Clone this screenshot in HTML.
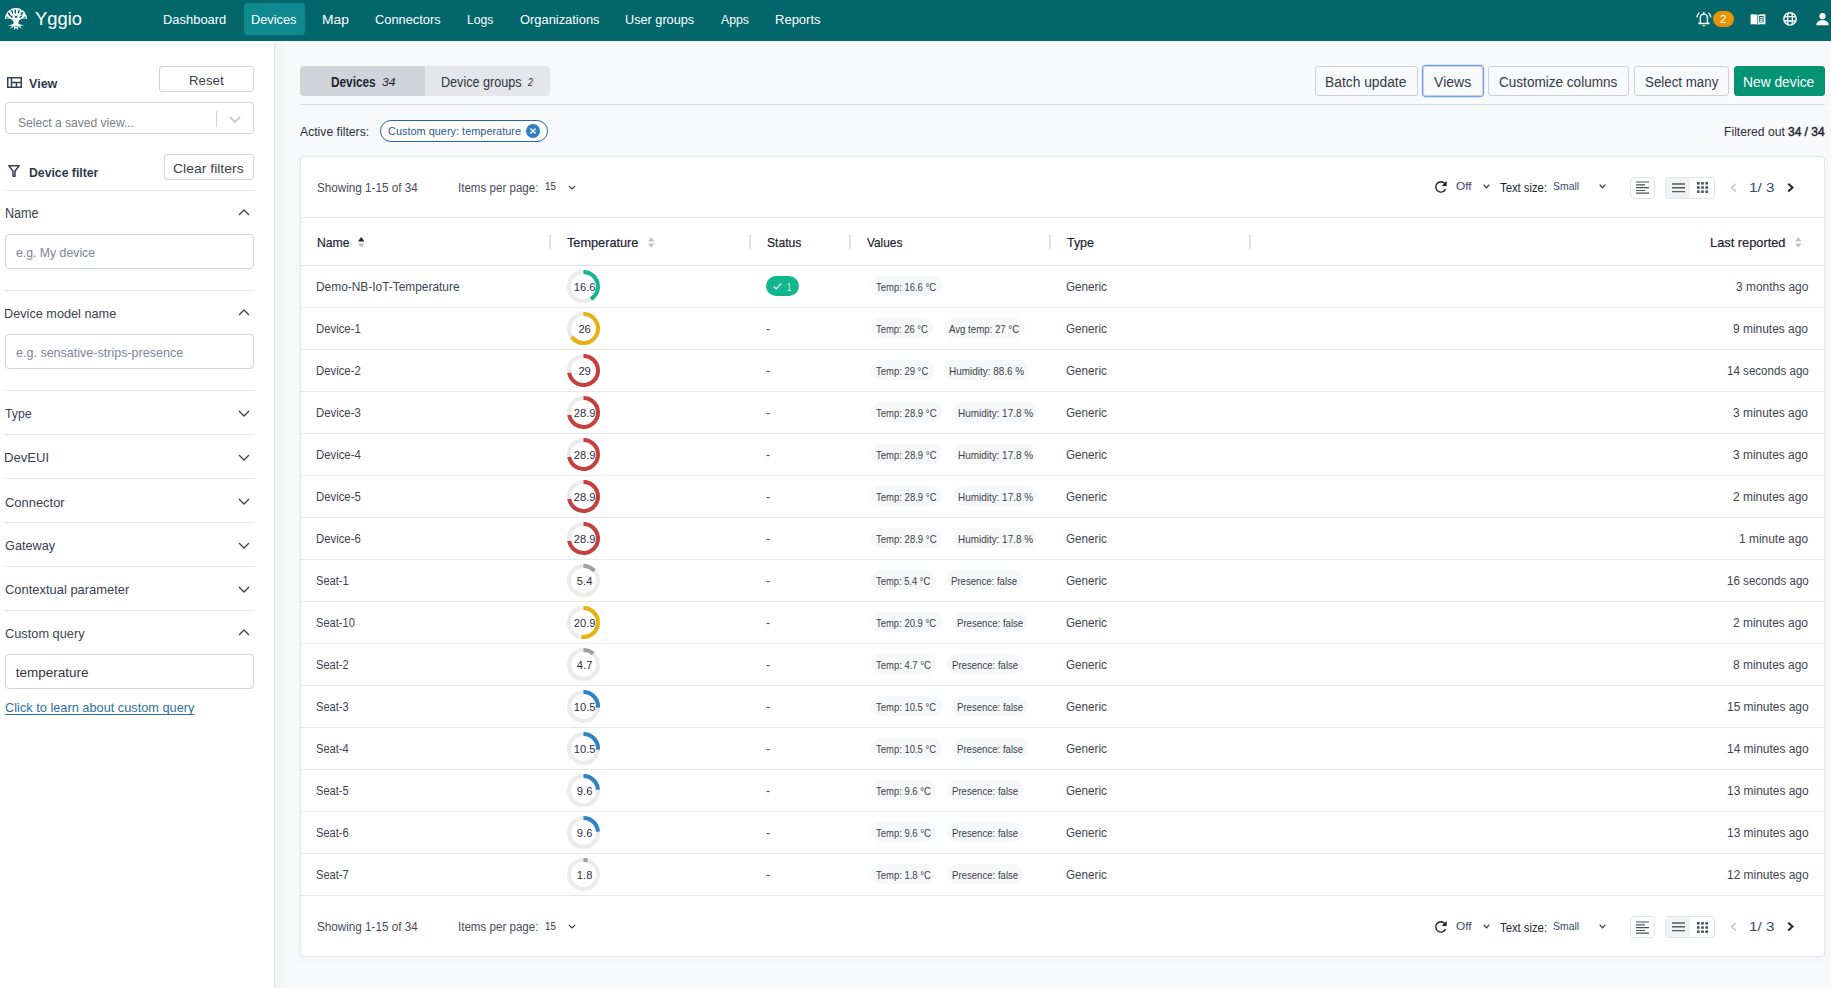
<!DOCTYPE html><html><head><meta charset="utf-8"><style>
*{box-sizing:border-box;margin:0;padding:0}
html,body{width:1831px;height:988px;overflow:hidden;background:#f8f9fb;font-family:"Liberation Sans",sans-serif}
.t{position:absolute;line-height:1;white-space:nowrap;transform-origin:0 0}
.r{position:absolute}
svg{position:absolute;overflow:visible}
</style></head><body>
<div class="r" style="left:0px;top:0px;width:1831px;height:41px;background:#02666b"></div>
<svg style="left:5px;top:8px" width="22" height="22" viewBox="0 0 22 22">
<path fill="#fff" d="M0 10.9 C0 4.6 5 0 11 0 C17 0 22 4.6 22 10.9 C19.2 10.3 16.6 10.7 14.6 11.9 C13.7 12.6 13.4 14 13.5 16 C14.3 16.6 15.4 16.9 16.6 17.1 L5.4 17.1 C6.6 16.9 7.7 16.6 8.5 16 C8.6 14 8.3 12.6 7.4 11.9 C5.4 10.7 2.8 10.3 0 10.9Z"/>
<path fill="#fff" opacity="0.9" d="M8.6 16.2 L2.5 17.6 L7.2 18 L5 20.8 L8.6 19 L9.6 22 L11 19.6 L12.4 22 L13.4 19 L17 20.8 L14.8 18 L19.5 17.6 L13.4 16.2Z"/>
<g fill="#02666b">
<path d="M8.8 7 L11 10.8 L13.2 7 C12.2 8.2 9.8 8.2 8.8 7Z"/>
<ellipse cx="4.2" cy="6.2" rx="0.9" ry="2" transform="rotate(-35 4.2 6.2)"/>
<ellipse cx="7.2" cy="3.7" rx="0.8" ry="2.1" transform="rotate(-15 7.2 3.7)"/>
<ellipse cx="10.3" cy="3.6" rx="0.8" ry="2.3"/>
<ellipse cx="13.7" cy="3.5" rx="0.8" ry="2.1" transform="rotate(15 13.7 3.5)"/>
<ellipse cx="16.9" cy="5.6" rx="0.9" ry="2" transform="rotate(35 16.9 5.6)"/>
<ellipse cx="6.4" cy="8.5" rx="0.8" ry="1.7" transform="rotate(-55 6.4 8.5)"/>
<ellipse cx="15.8" cy="8.7" rx="0.8" ry="1.7" transform="rotate(55 15.8 8.7)"/>
<ellipse cx="2.3" cy="9.3" rx="0.6" ry="1.3" transform="rotate(-70 2.3 9.3)"/>
<ellipse cx="19.7" cy="9.3" rx="0.6" ry="1.3" transform="rotate(70 19.7 9.3)"/>
<circle cx="5.5" cy="1.6" r="0.7"/><circle cx="16.5" cy="1.8" r="0.7"/><circle cx="1.2" cy="5.5" r="0.6"/><circle cx="20.8" cy="5.8" r="0.6"/>
<circle cx="8.8" cy="18.8" r="0.6"/><circle cx="12.9" cy="18.6" r="0.6"/><circle cx="11" cy="18.3" r="0.5"/>
</g>

</svg>
<div class="t" style="left:35.40px;top:9.22px;font-size:19px;color:#fff;font-weight:400;font-style:normal;transform:scaleX(0.9682);">Yggio</div>
<div class="r" style="left:244px;top:3px;width:61px;height:32px;background:#0e8a8f;border-radius:4px"></div>
<div class="t" style="left:162.95px;top:12.79px;font-size:13.6px;color:#fff;font-weight:400;font-style:normal;transform:scaleX(0.9516);">Dashboard</div>
<div class="t" style="left:251.46px;top:12.79px;font-size:13.6px;color:#fff;font-weight:400;font-style:normal;transform:scaleX(0.9400);">Devices</div>
<div class="t" style="left:322.38px;top:12.79px;font-size:13.6px;color:#fff;font-weight:400;font-style:normal;transform:scaleX(1.0207);">Map</div>
<div class="t" style="left:375.30px;top:12.79px;font-size:13.6px;color:#fff;font-weight:400;font-style:normal;transform:scaleX(0.9452);">Connectors</div>
<div class="t" style="left:466.70px;top:12.79px;font-size:13.6px;color:#fff;font-weight:400;font-style:normal;transform:scaleX(0.8961);">Logs</div>
<div class="t" style="left:519.60px;top:12.79px;font-size:13.6px;color:#fff;font-weight:400;font-style:normal;transform:scaleX(0.9480);">Organizations</div>
<div class="t" style="left:624.97px;top:12.79px;font-size:13.6px;color:#fff;font-weight:400;font-style:normal;transform:scaleX(0.9338);">User groups</div>
<div class="t" style="left:720.90px;top:12.79px;font-size:13.6px;color:#fff;font-weight:400;font-style:normal;transform:scaleX(0.9010);">Apps</div>
<div class="t" style="left:774.94px;top:12.79px;font-size:13.6px;color:#fff;font-weight:400;font-style:normal;transform:scaleX(0.9572);">Reports</div>
<svg style="left:1696px;top:12px" width="16" height="15" viewBox="0 0 16 15">
<g fill="none" stroke="#fff">
<path stroke-width="1.3" d="M4.3 10.6 L4.3 6.2 C4.3 3.8 5.7 2.2 7.8 2.2 C9.9 2.2 11.4 3.8 11.4 6.2 L11.4 10.6 C11.7 11 12.4 11.3 13.4 11.5 L2.3 11.5 C3.3 11.3 4 11 4.3 10.6Z"/>
<path stroke-width="1.25" d="M0.9 5.4 C1.1 3.5 2 1.8 3.4 0.6 M14.8 5.4 C14.6 3.5 13.7 1.8 12.3 0.6"/>
</g>
<circle cx="7.8" cy="1.1" r="1" fill="#fff"/>
<path d="M6.5 13.1 H9.2 C9.1 14 8.5 14.5 7.85 14.5 C7.2 14.5 6.6 14 6.5 13.1Z" fill="#fff"/>
</svg>
<div class="r" style="left:1713px;top:11px;width:21px;height:16px;background:#e69500;border-radius:8px"></div>
<div class="t" style="left:1720.30px;top:14.19px;font-size:11px;color:#fff;font-weight:400;font-style:normal;transform:scaleX(1.0500);">2</div>
<svg style="left:1750px;top:14px" width="16" height="11" viewBox="0 0 16 11">
<path d="M0.6 0.6 C2.6 0.1 5.2 0.2 7.4 0.8 L7.4 10.8 C5.2 10.2 2.6 10.2 0.6 10.6Z" fill="#fff"/>
<path d="M8 0.8 C10.2 0.2 12.9 0.1 15.4 0.6 L15.4 10.6 C12.9 10.2 10.2 10.2 8 10.8Z" fill="#fff"/>
<path d="M8.9 2 L13.6 1.9 L13.6 8.3 L8.9 8.5Z" fill="#02666b"/>
<path d="M9.6 3.5 H12.9 M9.6 5.3 H12.9 M9.6 7.1 H12.9" stroke="#fff" stroke-width="1.1"/>
</svg>
<svg style="left:1783px;top:12px" width="14" height="14" viewBox="0 0 14 14">
<g fill="none" stroke="#fff" stroke-width="1.4"><circle cx="7" cy="6.9" r="6.2"/><path d="M5 1 C4.5 4.5 4.5 9.3 5 12.8 M9 1 C9.5 4.5 9.5 9.3 9 12.8 M1 4.9 C4.5 4.6 9.5 4.6 13 4.9 M1 8.8 C4.5 9.1 9.5 9.1 13 8.8"/></g>
</svg>
<svg style="left:1815.5px;top:12.8px" width="13" height="12.2" viewBox="0 0 13 12.2">
<circle cx="6.5" cy="3.2" r="3.1" fill="#fff"/><path d="M0.3 12.2 C0.3 9 3 7.3 6.5 7.3 C10 7.3 12.7 9 12.7 12.2Z" fill="#fff"/>
</svg>
<div class="r" style="left:0px;top:41px;width:275px;height:947px;background:#fff;border-right:1px solid #e0e3e8"></div>
<div class="r" style="left:275px;top:41px;width:16px;height:947px;background:linear-gradient(to right,rgba(0,0,0,0.028),rgba(0,0,0,0))"></div>
<svg style="left:7px;top:77px" width="15" height="11" viewBox="0 0 15 11">
<g fill="none" stroke="#364052" stroke-width="1.5"><rect x="0.75" y="0.75" width="13.5" height="9.5"/><path d="M4.5 0.75 V10.25 M4.5 5.5 H14.25 M9.4 5.5 V10.25"/></g>
</svg>
<div class="t" style="left:29.30px;top:76.83px;font-size:13.2px;color:#2f3a4c;font-weight:700;font-style:normal;transform:scaleX(0.9524);">View</div>
<div class="r" style="left:159px;top:66px;width:95px;height:26px;border:1px solid #cfd3da;border-radius:3px;background:#fff"></div>
<div class="t" style="left:188.52px;top:73.67px;font-size:13.5px;color:#3b4250;font-weight:400;font-style:normal;transform:scaleX(0.9822);">Reset</div>
<div class="r" style="left:5px;top:102px;width:249px;height:32px;border:1px solid #cfd3da;border-radius:4px;background:#fff"></div>
<div class="t" style="left:18.10px;top:116.00px;font-size:13px;color:#7b7f85;font-weight:400;font-style:normal;transform:scaleX(0.9285);">Select a saved view...</div>
<div class="r" style="left:216px;top:111px;width:1px;height:16px;background:#cfd3da"></div>
<svg style="left:229px;top:116px" width="12" height="7" viewBox="0 0 12 7"><path d="M1 1 L6 6 L11 1" fill="none" stroke="#c5c8ce" stroke-width="1.8"/></svg>
<svg style="left:8px;top:165px" width="12" height="12" viewBox="0 0 12 12"><path d="M0.8 0.8 H11.2 L7 6 V11.2 H5 V6Z" fill="none" stroke="#364052" stroke-width="1.5" stroke-linejoin="round"/></svg>
<div class="t" style="left:28.80px;top:165.87px;font-size:13.5px;color:#2f3a4c;font-weight:700;font-style:normal;transform:scaleX(0.9058);">Device filter</div>
<div class="r" style="left:164px;top:154px;width:90px;height:26px;border:1px solid #cfd3da;border-radius:3px;background:#fff"></div>
<div class="t" style="left:173.40px;top:161.87px;font-size:13.5px;color:#3b4250;font-weight:400;font-style:normal;transform:scaleX(1.0348);">Clear filters</div>
<div class="r" style="left:5px;top:190px;width:249px;height:1px;background:#e3e5ea"></div>
<div class="t" style="left:4.79px;top:206.82px;font-size:13.8px;color:#3a4150;font-weight:400;font-style:normal;transform:scaleX(0.9106);">Name</div>
<svg style="left:238px;top:209px" width="12" height="7" viewBox="0 0 12 7"><path d="M1 6 L6 1 L11 6" fill="none" stroke="#3a4150" stroke-width="1.3"/></svg>
<div class="r" style="left:5px;top:234px;width:249px;height:35px;border:1px solid #cfd3da;border-radius:4px;background:#fff"></div>
<div class="t" style="left:16.30px;top:245.94px;font-size:13.3px;color:#7d8696;font-weight:400;font-style:normal;transform:scaleX(0.9223);">e.g. My device</div>
<div class="r" style="left:5px;top:290px;width:249px;height:1px;background:#e3e5ea"></div>
<div class="t" style="left:4.26px;top:307.17px;font-size:13.5px;color:#3a4150;font-weight:400;font-style:normal;transform:scaleX(0.9406);">Device model name</div>
<svg style="left:238px;top:309px" width="12" height="7" viewBox="0 0 12 7"><path d="M1 6 L6 1 L11 6" fill="none" stroke="#3a4150" stroke-width="1.3"/></svg>
<div class="r" style="left:5px;top:334px;width:249px;height:35px;border:1px solid #cfd3da;border-radius:4px;background:#fff"></div>
<div class="t" style="left:16.30px;top:345.94px;font-size:13.3px;color:#7d8696;font-weight:400;font-style:normal;transform:scaleX(0.9425);">e.g. sensative-strips-presence</div>
<div class="r" style="left:5px;top:390px;width:249px;height:1px;background:#e3e5ea"></div>
<div class="t" style="left:5.20px;top:407.37px;font-size:13.5px;color:#3a4150;font-weight:400;font-style:normal;transform:scaleX(0.9075);">Type</div>
<svg style="left:238px;top:410px" width="12" height="7" viewBox="0 0 12 7"><path d="M1 1 L6 6 L11 1" fill="none" stroke="#3a4150" stroke-width="1.3"/></svg>
<div class="r" style="left:5px;top:434px;width:249px;height:1px;background:#e3e5ea"></div>
<div class="t" style="left:4.23px;top:451.37px;font-size:13.5px;color:#3a4150;font-weight:400;font-style:normal;transform:scaleX(0.9696);">DevEUI</div>
<svg style="left:238px;top:454px" width="12" height="7" viewBox="0 0 12 7"><path d="M1 1 L6 6 L11 1" fill="none" stroke="#3a4150" stroke-width="1.3"/></svg>
<div class="r" style="left:5px;top:478px;width:249px;height:1px;background:#e3e5ea"></div>
<div class="t" style="left:5.20px;top:495.67px;font-size:13.5px;color:#3a4150;font-weight:400;font-style:normal;transform:scaleX(0.9572);">Connector</div>
<svg style="left:238px;top:498px" width="12" height="7" viewBox="0 0 12 7"><path d="M1 1 L6 6 L11 1" fill="none" stroke="#3a4150" stroke-width="1.3"/></svg>
<div class="r" style="left:5px;top:522px;width:249px;height:1px;background:#e3e5ea"></div>
<div class="t" style="left:5.20px;top:539.47px;font-size:13.5px;color:#3a4150;font-weight:400;font-style:normal;transform:scaleX(0.9416);">Gateway</div>
<svg style="left:238px;top:542px" width="12" height="7" viewBox="0 0 12 7"><path d="M1 1 L6 6 L11 1" fill="none" stroke="#3a4150" stroke-width="1.3"/></svg>
<div class="r" style="left:5px;top:566px;width:249px;height:1px;background:#e3e5ea"></div>
<div class="t" style="left:5.20px;top:583.47px;font-size:13.5px;color:#3a4150;font-weight:400;font-style:normal;transform:scaleX(0.9576);">Contextual parameter</div>
<svg style="left:238px;top:586px" width="12" height="7" viewBox="0 0 12 7"><path d="M1 1 L6 6 L11 1" fill="none" stroke="#3a4150" stroke-width="1.3"/></svg>
<div class="r" style="left:5px;top:610px;width:249px;height:1px;background:#e3e5ea"></div>
<div class="t" style="left:5.20px;top:627.47px;font-size:13.5px;color:#3a4150;font-weight:400;font-style:normal;transform:scaleX(0.9468);">Custom query</div>
<svg style="left:238px;top:629px" width="12" height="7" viewBox="0 0 12 7"><path d="M1 6 L6 1 L11 6" fill="none" stroke="#3a4150" stroke-width="1.3"/></svg>
<div class="r" style="left:5px;top:654px;width:249px;height:35px;border:1px solid #cfd3da;border-radius:4px;background:#fff"></div>
<div class="t" style="left:15.80px;top:665.77px;font-size:13.5px;color:#333840;font-weight:400;font-style:normal;">temperature</div>
<div class="t" style="left:5.20px;top:701.44px;font-size:13.3px;color:#2d6fa6;font-weight:400;font-style:normal;transform:scaleX(0.9601);text-decoration:underline;text-underline-offset:2px">Click to learn about custom query</div>
<div class="r" style="left:300px;top:66px;width:250px;height:30px;background:#e4e6ea;border-radius:4px"></div>
<div class="r" style="left:300px;top:66px;width:125px;height:30px;background:#d1d4da;border-radius:4px 0 0 4px"></div>
<div class="t" style="left:330.50px;top:74.65px;font-size:14px;color:#1f2530;font-weight:700;font-style:normal;transform:scaleX(0.8430);">Devices</div>
<div class="t" style="left:381.60px;top:76.77px;font-size:11.5px;color:#1f2530;font-weight:400;font-style:italic;transform:scaleX(1.0487);">34</div>
<div class="t" style="left:440.60px;top:74.65px;font-size:14px;color:#2f3542;font-weight:400;font-style:normal;transform:scaleX(0.9007);">Device groups</div>
<div class="t" style="left:528.07px;top:76.77px;font-size:11.5px;color:#2f3542;font-weight:400;font-style:italic;transform:scaleX(0.7750);">2</div>
<div class="r" style="left:300px;top:104px;width:1525px;height:1px;background:#d8dbe0"></div>
<div class="r" style="left:1315px;top:66px;width:103px;height:30px;border:1px solid #cdd0d6;border-radius:3px;background:transparent;"></div>
<div class="t" style="left:1325.11px;top:75.25px;font-size:14px;color:#343a46;font-weight:400;font-style:normal;transform:scaleX(0.9863);">Batch update</div>
<div class="r" style="left:1423px;top:66px;width:60px;height:30px;border:1px solid #cdd0d6;border-radius:3px;background:transparent;box-shadow:0 0 0 1.2px #6ea2f7"></div>
<div class="t" style="left:1434.10px;top:75.25px;font-size:14px;color:#343a46;font-weight:400;font-style:normal;">Views</div>
<div class="r" style="left:1488px;top:66px;width:141px;height:30px;border:1px solid #cdd0d6;border-radius:3px;background:transparent;"></div>
<div class="t" style="left:1498.70px;top:75.25px;font-size:14px;color:#343a46;font-weight:400;font-style:normal;transform:scaleX(0.9685);">Customize columns</div>
<div class="r" style="left:1634px;top:66px;width:95px;height:30px;border:1px solid #cdd0d6;border-radius:3px;background:transparent;"></div>
<div class="t" style="left:1644.60px;top:75.25px;font-size:14px;color:#343a46;font-weight:400;font-style:normal;transform:scaleX(0.9515);">Select many</div>
<div class="r" style="left:1734px;top:66px;width:91px;height:30px;border:1px solid #049474;border-radius:3px;background:#049474;box-shadow:0 0 0 1px #fff"></div>
<div class="t" style="left:1743.32px;top:75.25px;font-size:14px;color:#fff;font-weight:400;font-style:normal;transform:scaleX(0.9849);">New device</div>
<div class="t" style="left:300.40px;top:125.99px;font-size:12.3px;color:#2b303a;font-weight:400;font-style:normal;transform:scaleX(0.9916);">Active filters:</div>
<div class="r" style="left:380px;top:120px;width:168px;height:22px;border:1.4px solid #2a64a8;border-radius:11px;background:#fff"></div>
<div class="t" style="left:388.40px;top:126.22px;font-size:11.2px;color:#2c5b8f;font-weight:400;font-style:normal;transform:scaleX(0.9768);">Custom query: temperature</div>
<svg style="left:526px;top:124px" width="14" height="14" viewBox="0 0 14 14"><circle cx="7" cy="7" r="7" fill="#2e7dc5"/><path d="M4.4 4.4 L9.6 9.6 M9.6 4.4 L4.4 9.6" stroke="#fff" stroke-width="1.4"/></svg>
<div class="t" style="left:1723.51px;top:125.89px;font-size:12.3px;color:#2b303a;font-weight:400;font-style:normal;transform:scaleX(0.9902);">Filtered out</div>
<div class="t" style="left:1787.90px;top:125.89px;font-size:12.3px;color:#1f2530;font-weight:400;font-style:normal;transform:scaleX(0.9718);-webkit-text-stroke:0.45px #1f2530">34 / 34</div>
<div class="r" style="left:300px;top:156px;width:1525px;height:801px;background:#fff;border:1px solid #e2e4e9;border-radius:4px;box-shadow:0 2px 10px rgba(0,0,0,0.035)"></div>
<div class="t" style="left:317.30px;top:181.99px;font-size:12.3px;color:#474c57;font-weight:400;font-style:normal;transform:scaleX(0.9498);">Showing 1-15 of 34</div>
<div class="t" style="left:458.16px;top:181.99px;font-size:12.3px;color:#474c57;font-weight:400;font-style:normal;transform:scaleX(0.9414);">Items per page:</div>
<div class="t" style="left:544.70px;top:181.36px;font-size:10.8px;color:#2b303a;font-weight:400;font-style:normal;transform:scaleX(0.8996);">15</div>
<svg style="left:568px;top:184.5px" width="8" height="5" viewBox="0 0 8 5"><path d="M0.8 0.8 L4 4 L7.2 0.8" fill="none" stroke="#333" stroke-width="1.1"/></svg>
<svg style="left:1434px;top:180px" width="14" height="14" viewBox="1434 180 14 14"><path d="M1445.6 189.1 A5.15 5.15 0 1 1 1444.85 183.6" fill="none" stroke="#1c2029" stroke-width="1.35"/><path d="M1446.7 180.9 L1446.7 185.9 L1441.7 185.9Z" fill="#1c2029"/></svg>
<div class="t" style="left:1455.60px;top:182.00px;font-size:10.4px;color:#3b4a6b;font-weight:400;font-style:normal;transform:scaleX(1.1465);">Off</div>
<svg style="left:1482.5px;top:184px" width="7" height="5" viewBox="0 0 7 5"><path d="M0.7 0.7 L3.5 3.9 L6.3 0.7" fill="none" stroke="#333" stroke-width="1.2"/></svg>
<div class="t" style="left:1500.40px;top:182.14px;font-size:12px;color:#22262e;font-weight:400;font-style:normal;transform:scaleX(0.9400);">Text size:</div>
<div class="t" style="left:1552.80px;top:181.03px;font-size:11.3px;color:#3b4a6b;font-weight:400;font-style:normal;transform:scaleX(0.9265);">Small</div>
<svg style="left:1598.5px;top:184px" width="7" height="5" viewBox="0 0 7 5"><path d="M0.7 0.7 L3.5 3.9 L6.3 0.7" fill="none" stroke="#333" stroke-width="1.2"/></svg>
<div class="r" style="left:1630px;top:176.5px;width:25px;height:22px;border:1px solid #e1e3e7;border-radius:4px;background:#fff"></div>
<svg style="left:1636px;top:181px" width="13" height="13" viewBox="0 0 13 13"><path d="M0 1 H13 M0 3.9 H9 M0 6.6 H13 M0 9.5 H9 M0 12.2 H13" stroke="#4a4f58" stroke-width="1.2"/></svg>
<div class="r" style="left:1665px;top:176.5px;width:50px;height:22px;border:1px solid #e1e3e7;border-radius:4px;background:#fff"></div>
<div class="r" style="left:1666px;top:177.5px;width:24px;height:20px;background:#f1f2f4;border-radius:3px 0 0 3px"></div>
<svg style="left:1672px;top:182.5px" width="13" height="10" viewBox="0 0 13 10"><path d="M0 1 H13 M0 4.8 H13 M0 8.6 H13" stroke="#555a63" stroke-width="1.4"/></svg>
<svg style="left:1697px;top:182px" width="11" height="11" viewBox="0 0 11 11"><g fill="#4a4f58"><rect x="0.0" y="0.0" width="2.6" height="2.6"/><rect x="4.2" y="0.0" width="2.6" height="2.6"/><rect x="8.4" y="0.0" width="2.6" height="2.6"/><rect x="0.0" y="4.2" width="2.6" height="2.6"/><rect x="4.2" y="4.2" width="2.6" height="2.6"/><rect x="8.4" y="4.2" width="2.6" height="2.6"/><rect x="0.0" y="8.4" width="2.6" height="2.6"/><rect x="4.2" y="8.4" width="2.6" height="2.6"/><rect x="8.4" y="8.4" width="2.6" height="2.6"/></g></svg>
<svg style="left:1730px;top:182.5px" width="7" height="10" viewBox="0 0 7 10"><path d="M5.8 0.8 L1.5 4.6 L5.8 8.4" fill="none" stroke="#c5c9d0" stroke-width="1.6"/></svg>
<div class="t" style="left:1748.97px;top:180.97px;font-size:13.5px;color:#3b4a6b;font-weight:400;font-style:normal;transform:scaleX(1.1281);">1/ 3</div>
<svg style="left:1787px;top:182.5px" width="7" height="10" viewBox="0 0 7 10"><path d="M1.2 0.8 L5.5 4.6 L1.2 8.4" fill="none" stroke="#1f2530" stroke-width="2"/></svg>
<div class="r" style="left:301px;top:217px;width:1523px;height:1px;background:#e4e6eb"></div>
<div class="t" style="left:316.68px;top:236.33px;font-size:13.2px;color:#1c2330;font-weight:400;font-style:normal;transform:scaleX(0.9249);-webkit-text-stroke:0.2px #1c2330">Name</div>
<svg style="left:357.8px;top:236.7px" width="6.5" height="10.7" viewBox="0 0 6.5 10.7"><path d="M3.25 0 L6.5 4.6 H0Z" fill="#1c2330"/><path d="M3.25 10.7 L6.5 6.6 H0Z" fill="#c2c2c2"/></svg>
<div class="r" style="left:549px;top:235px;width:2px;height:14px;background:#e0e0e0"></div>
<div class="t" style="left:567.20px;top:236.33px;font-size:13.2px;color:#1c2330;font-weight:400;font-style:normal;transform:scaleX(0.9648);-webkit-text-stroke:0.2px #1c2330">Temperature</div>
<svg style="left:647.5px;top:236.7px" width="6.5" height="10.7" viewBox="0 0 6.5 10.7"><path d="M3.25 0 L6.5 4.6 H0Z" fill="#c2c2c2"/><path d="M3.25 10.7 L6.5 6.6 H0Z" fill="#c2c2c2"/></svg>
<div class="r" style="left:749px;top:235px;width:2px;height:14px;background:#e0e0e0"></div>
<div class="t" style="left:767.10px;top:236.33px;font-size:13.2px;color:#1c2330;font-weight:400;font-style:normal;transform:scaleX(0.9208);-webkit-text-stroke:0.2px #1c2330">Status</div>
<div class="r" style="left:849px;top:235px;width:2px;height:14px;background:#e0e0e0"></div>
<div class="t" style="left:867.40px;top:236.33px;font-size:13.2px;color:#1c2330;font-weight:400;font-style:normal;transform:scaleX(0.8981);-webkit-text-stroke:0.2px #1c2330">Values</div>
<div class="r" style="left:1049px;top:235px;width:2px;height:14px;background:#e0e0e0"></div>
<div class="t" style="left:1066.70px;top:236.33px;font-size:13.2px;color:#1c2330;font-weight:400;font-style:normal;transform:scaleX(0.9414);-webkit-text-stroke:0.2px #1c2330">Type</div>
<div class="r" style="left:1249px;top:235px;width:2px;height:14px;background:#e0e0e0"></div>
<div class="t" style="left:1710.33px;top:236.33px;font-size:13.2px;color:#1c2330;font-weight:400;font-style:normal;transform:scaleX(0.9715);-webkit-text-stroke:0.2px #1c2330">Last reported</div>
<svg style="left:1795px;top:236.7px" width="6.5" height="10.7" viewBox="0 0 6.5 10.7"><path d="M3.25 0 L6.5 4.6 H0Z" fill="#c2c2c2"/><path d="M3.25 10.7 L6.5 6.6 H0Z" fill="#c2c2c2"/></svg>
<div class="r" style="left:301px;top:265px;width:1523px;height:1px;background:#e3e3e3"></div>
<div class="t" style="left:316.40px;top:281.04px;font-size:12px;color:#3e4450;font-weight:400;font-style:normal;transform:scaleX(0.9920);">Demo-NB-IoT-Temperature</div>
<svg style="left:565px;top:268.0px" width="37" height="37" viewBox="565 268.0 37 37"><circle cx="583.5" cy="286.5" r="14.5" fill="none" stroke="#ebebeb" stroke-width="4"/><path d="M583.5 272.0 A14.5 14.5 0 0 1 590.88 298.98" fill="none" stroke="#12b78f" stroke-width="4"/></svg>
<div class="t" style="left:573.72px;top:281.82px;font-size:11.2px;color:#2d3142;font-weight:400;font-style:normal;">16.6</div>
<div class="r" style="left:766px;top:276.0px;width:33px;height:20px;background:#12b78f;border-radius:10px"></div>
<svg style="left:772.7px;top:283.1px" width="9" height="7" viewBox="0 0 9 7"><path d="M0.7 3.3 L3.2 5.9 L8.3 0.6" fill="none" stroke="#fff" stroke-width="1.2"/></svg>
<div class="t" style="left:786.70px;top:282.07px;font-size:11.5px;color:#e9f7f1;font-weight:400;font-style:normal;transform:scaleX(0.6500);">1</div>
<div class="r" style="left:871.2px;top:276.0px;width:70.5px;height:20px;background:#f6f7f9;border-radius:10px"></div>
<div class="t" style="left:876.20px;top:282.01px;font-size:10.5px;color:#3b3f48;font-weight:400;font-style:normal;transform:scaleX(0.9021);">Temp: 16.6 °C</div>
<div class="t" style="left:1066.20px;top:281.04px;font-size:12px;color:#3e4450;font-weight:400;font-style:normal;transform:scaleX(0.9740);">Generic</div>
<div class="t" style="left:1736.12px;top:281.04px;font-size:12px;color:#3e4450;font-weight:400;font-style:normal;transform:scaleX(0.9950);">3 months ago</div>
<div class="r" style="left:301px;top:307px;width:1523px;height:1px;background:#e6e8ec"></div>
<div class="t" style="left:316.40px;top:323.04px;font-size:12px;color:#3e4450;font-weight:400;font-style:normal;transform:scaleX(0.9450);">Device-1</div>
<svg style="left:565px;top:310.0px" width="37" height="37" viewBox="565 310.0 37 37"><circle cx="583.5" cy="328.5" r="14.5" fill="none" stroke="#ebebeb" stroke-width="4"/><path d="M583.5 314.0 A14.5 14.5 0 1 1 571.77 337.02" fill="none" stroke="#e8b10f" stroke-width="4"/></svg>
<div class="t" style="left:578.39px;top:323.82px;font-size:11.2px;color:#2d3142;font-weight:400;font-style:normal;">26</div>
<div class="t" style="left:766.10px;top:322.94px;font-size:12px;color:#3e4450;font-weight:400;font-style:normal;">-</div>
<div class="r" style="left:871.2px;top:318.0px;width:62.3px;height:20px;background:#f6f7f9;border-radius:10px"></div>
<div class="t" style="left:876.20px;top:324.01px;font-size:10.5px;color:#3b3f48;font-weight:400;font-style:normal;transform:scaleX(0.8970);">Temp: 26 °C</div>
<div class="r" style="left:944.0px;top:318.0px;width:80.5px;height:20px;background:#f6f7f9;border-radius:10px"></div>
<div class="t" style="left:949.00px;top:324.01px;font-size:10.5px;color:#3b3f48;font-weight:400;font-style:normal;transform:scaleX(0.9180);">Avg temp: 27 °C</div>
<div class="t" style="left:1066.20px;top:323.04px;font-size:12px;color:#3e4450;font-weight:400;font-style:normal;transform:scaleX(0.9740);">Generic</div>
<div class="t" style="left:1733.47px;top:323.04px;font-size:12px;color:#3e4450;font-weight:400;font-style:normal;transform:scaleX(0.9950);">9 minutes ago</div>
<div class="r" style="left:301px;top:349px;width:1523px;height:1px;background:#e6e8ec"></div>
<div class="t" style="left:316.40px;top:365.04px;font-size:12px;color:#3e4450;font-weight:400;font-style:normal;transform:scaleX(0.9450);">Device-2</div>
<svg style="left:565px;top:352.0px" width="37" height="37" viewBox="565 352.0 37 37"><circle cx="583.5" cy="370.5" r="14.5" fill="none" stroke="#ebebeb" stroke-width="4"/><path d="M583.5 356.0 A14.5 14.5 0 1 1 569.18 372.77" fill="none" stroke="#c53f3f" stroke-width="4"/></svg>
<div class="t" style="left:578.39px;top:365.82px;font-size:11.2px;color:#2d3142;font-weight:400;font-style:normal;">29</div>
<div class="t" style="left:766.10px;top:364.94px;font-size:12px;color:#3e4450;font-weight:400;font-style:normal;">-</div>
<div class="r" style="left:871.2px;top:360.0px;width:62.6px;height:20px;background:#f6f7f9;border-radius:10px"></div>
<div class="t" style="left:876.20px;top:366.01px;font-size:10.5px;color:#3b3f48;font-weight:400;font-style:normal;transform:scaleX(0.9021);">Temp: 29 °C</div>
<div class="r" style="left:944.3px;top:360.0px;width:84.8px;height:20px;background:#f6f7f9;border-radius:10px"></div>
<div class="t" style="left:949.30px;top:366.01px;font-size:10.5px;color:#3b3f48;font-weight:400;font-style:normal;transform:scaleX(0.9465);">Humidity: 88.6 %</div>
<div class="t" style="left:1066.20px;top:365.04px;font-size:12px;color:#3e4450;font-weight:400;font-style:normal;transform:scaleX(0.9740);">Generic</div>
<div class="t" style="left:1726.72px;top:365.04px;font-size:12px;color:#3e4450;font-weight:400;font-style:normal;transform:scaleX(0.9650);">14 seconds ago</div>
<div class="r" style="left:301px;top:391px;width:1523px;height:1px;background:#e6e8ec"></div>
<div class="t" style="left:316.40px;top:407.04px;font-size:12px;color:#3e4450;font-weight:400;font-style:normal;transform:scaleX(0.9450);">Device-3</div>
<svg style="left:565px;top:394.0px" width="37" height="37" viewBox="565 394.0 37 37"><circle cx="583.5" cy="412.5" r="14.5" fill="none" stroke="#ebebeb" stroke-width="4"/><path d="M583.5 398.0 A14.5 14.5 0 1 1 569.22 414.99" fill="none" stroke="#c53f3f" stroke-width="4"/></svg>
<div class="t" style="left:573.72px;top:407.82px;font-size:11.2px;color:#2d3142;font-weight:400;font-style:normal;">28.9</div>
<div class="t" style="left:766.10px;top:406.94px;font-size:12px;color:#3e4450;font-weight:400;font-style:normal;">-</div>
<div class="r" style="left:871.2px;top:402.0px;width:70.9px;height:20px;background:#f6f7f9;border-radius:10px"></div>
<div class="t" style="left:876.20px;top:408.01px;font-size:10.5px;color:#3b3f48;font-weight:400;font-style:normal;transform:scaleX(0.9081);">Temp: 28.9 °C</div>
<div class="r" style="left:952.6px;top:402.0px;width:84.7px;height:20px;background:#f6f7f9;border-radius:10px"></div>
<div class="t" style="left:957.60px;top:408.01px;font-size:10.5px;color:#3b3f48;font-weight:400;font-style:normal;transform:scaleX(0.9452);">Humidity: 17.8 %</div>
<div class="t" style="left:1066.20px;top:407.04px;font-size:12px;color:#3e4450;font-weight:400;font-style:normal;transform:scaleX(0.9740);">Generic</div>
<div class="t" style="left:1733.47px;top:407.04px;font-size:12px;color:#3e4450;font-weight:400;font-style:normal;transform:scaleX(0.9950);">3 minutes ago</div>
<div class="r" style="left:301px;top:433px;width:1523px;height:1px;background:#e6e8ec"></div>
<div class="t" style="left:316.40px;top:449.04px;font-size:12px;color:#3e4450;font-weight:400;font-style:normal;transform:scaleX(0.9450);">Device-4</div>
<svg style="left:565px;top:436.0px" width="37" height="37" viewBox="565 436.0 37 37"><circle cx="583.5" cy="454.5" r="14.5" fill="none" stroke="#ebebeb" stroke-width="4"/><path d="M583.5 440.0 A14.5 14.5 0 1 1 569.22 456.99" fill="none" stroke="#c53f3f" stroke-width="4"/></svg>
<div class="t" style="left:573.72px;top:449.82px;font-size:11.2px;color:#2d3142;font-weight:400;font-style:normal;">28.9</div>
<div class="t" style="left:766.10px;top:448.94px;font-size:12px;color:#3e4450;font-weight:400;font-style:normal;">-</div>
<div class="r" style="left:871.2px;top:444.0px;width:70.9px;height:20px;background:#f6f7f9;border-radius:10px"></div>
<div class="t" style="left:876.20px;top:450.01px;font-size:10.5px;color:#3b3f48;font-weight:400;font-style:normal;transform:scaleX(0.9081);">Temp: 28.9 °C</div>
<div class="r" style="left:952.6px;top:444.0px;width:84.7px;height:20px;background:#f6f7f9;border-radius:10px"></div>
<div class="t" style="left:957.60px;top:450.01px;font-size:10.5px;color:#3b3f48;font-weight:400;font-style:normal;transform:scaleX(0.9452);">Humidity: 17.8 %</div>
<div class="t" style="left:1066.20px;top:449.04px;font-size:12px;color:#3e4450;font-weight:400;font-style:normal;transform:scaleX(0.9740);">Generic</div>
<div class="t" style="left:1733.47px;top:449.04px;font-size:12px;color:#3e4450;font-weight:400;font-style:normal;transform:scaleX(0.9950);">3 minutes ago</div>
<div class="r" style="left:301px;top:475px;width:1523px;height:1px;background:#e6e8ec"></div>
<div class="t" style="left:316.40px;top:491.04px;font-size:12px;color:#3e4450;font-weight:400;font-style:normal;transform:scaleX(0.9450);">Device-5</div>
<svg style="left:565px;top:478.0px" width="37" height="37" viewBox="565 478.0 37 37"><circle cx="583.5" cy="496.5" r="14.5" fill="none" stroke="#ebebeb" stroke-width="4"/><path d="M583.5 482.0 A14.5 14.5 0 1 1 569.22 498.99" fill="none" stroke="#c53f3f" stroke-width="4"/></svg>
<div class="t" style="left:573.72px;top:491.82px;font-size:11.2px;color:#2d3142;font-weight:400;font-style:normal;">28.9</div>
<div class="t" style="left:766.10px;top:490.94px;font-size:12px;color:#3e4450;font-weight:400;font-style:normal;">-</div>
<div class="r" style="left:871.2px;top:486.0px;width:70.9px;height:20px;background:#f6f7f9;border-radius:10px"></div>
<div class="t" style="left:876.20px;top:492.01px;font-size:10.5px;color:#3b3f48;font-weight:400;font-style:normal;transform:scaleX(0.9081);">Temp: 28.9 °C</div>
<div class="r" style="left:952.6px;top:486.0px;width:84.7px;height:20px;background:#f6f7f9;border-radius:10px"></div>
<div class="t" style="left:957.60px;top:492.01px;font-size:10.5px;color:#3b3f48;font-weight:400;font-style:normal;transform:scaleX(0.9452);">Humidity: 17.8 %</div>
<div class="t" style="left:1066.20px;top:491.04px;font-size:12px;color:#3e4450;font-weight:400;font-style:normal;transform:scaleX(0.9740);">Generic</div>
<div class="t" style="left:1733.47px;top:491.04px;font-size:12px;color:#3e4450;font-weight:400;font-style:normal;transform:scaleX(0.9950);">2 minutes ago</div>
<div class="r" style="left:301px;top:517px;width:1523px;height:1px;background:#e6e8ec"></div>
<div class="t" style="left:316.40px;top:533.04px;font-size:12px;color:#3e4450;font-weight:400;font-style:normal;transform:scaleX(0.9450);">Device-6</div>
<svg style="left:565px;top:520.0px" width="37" height="37" viewBox="565 520.0 37 37"><circle cx="583.5" cy="538.5" r="14.5" fill="none" stroke="#ebebeb" stroke-width="4"/><path d="M583.5 524.0 A14.5 14.5 0 1 1 569.22 540.99" fill="none" stroke="#c53f3f" stroke-width="4"/></svg>
<div class="t" style="left:573.72px;top:533.82px;font-size:11.2px;color:#2d3142;font-weight:400;font-style:normal;">28.9</div>
<div class="t" style="left:766.10px;top:532.94px;font-size:12px;color:#3e4450;font-weight:400;font-style:normal;">-</div>
<div class="r" style="left:871.2px;top:528.0px;width:70.9px;height:20px;background:#f6f7f9;border-radius:10px"></div>
<div class="t" style="left:876.20px;top:534.01px;font-size:10.5px;color:#3b3f48;font-weight:400;font-style:normal;transform:scaleX(0.9081);">Temp: 28.9 °C</div>
<div class="r" style="left:952.6px;top:528.0px;width:84.7px;height:20px;background:#f6f7f9;border-radius:10px"></div>
<div class="t" style="left:957.60px;top:534.01px;font-size:10.5px;color:#3b3f48;font-weight:400;font-style:normal;transform:scaleX(0.9452);">Humidity: 17.8 %</div>
<div class="t" style="left:1066.20px;top:533.04px;font-size:12px;color:#3e4450;font-weight:400;font-style:normal;transform:scaleX(0.9740);">Generic</div>
<div class="t" style="left:1739.44px;top:533.04px;font-size:12px;color:#3e4450;font-weight:400;font-style:normal;transform:scaleX(0.9950);">1 minute ago</div>
<div class="r" style="left:301px;top:559px;width:1523px;height:1px;background:#e6e8ec"></div>
<div class="t" style="left:316.40px;top:575.04px;font-size:12px;color:#3e4450;font-weight:400;font-style:normal;transform:scaleX(0.9250);">Seat-1</div>
<svg style="left:565px;top:562.0px" width="37" height="37" viewBox="565 562.0 37 37"><circle cx="583.5" cy="580.5" r="14.5" fill="none" stroke="#ebebeb" stroke-width="4"/><path d="M583.5 566.0 A14.5 14.5 0 0 1 594.38 570.91" fill="none" stroke="#9ba1a9" stroke-width="4"/></svg>
<div class="t" style="left:576.83px;top:575.82px;font-size:11.2px;color:#2d3142;font-weight:400;font-style:normal;">5.4</div>
<div class="t" style="left:766.10px;top:574.94px;font-size:12px;color:#3e4450;font-weight:400;font-style:normal;">-</div>
<div class="r" style="left:871.2px;top:570.0px;width:64.7px;height:20px;background:#f6f7f9;border-radius:10px"></div>
<div class="t" style="left:876.20px;top:576.01px;font-size:10.5px;color:#3b3f48;font-weight:400;font-style:normal;transform:scaleX(0.8935);">Temp: 5.4 °C</div>
<div class="r" style="left:946.4px;top:570.0px;width:76.3px;height:20px;background:#f6f7f9;border-radius:10px"></div>
<div class="t" style="left:951.40px;top:576.01px;font-size:10.5px;color:#3b3f48;font-weight:400;font-style:normal;transform:scaleX(0.9141);">Presence: false</div>
<div class="t" style="left:1066.20px;top:575.04px;font-size:12px;color:#3e4450;font-weight:400;font-style:normal;transform:scaleX(0.9740);">Generic</div>
<div class="t" style="left:1726.72px;top:575.04px;font-size:12px;color:#3e4450;font-weight:400;font-style:normal;transform:scaleX(0.9650);">16 seconds ago</div>
<div class="r" style="left:301px;top:601px;width:1523px;height:1px;background:#e6e8ec"></div>
<div class="t" style="left:316.40px;top:617.04px;font-size:12px;color:#3e4450;font-weight:400;font-style:normal;transform:scaleX(0.9250);">Seat-10</div>
<svg style="left:565px;top:604.0px" width="37" height="37" viewBox="565 604.0 37 37"><circle cx="583.5" cy="622.5" r="14.5" fill="none" stroke="#ebebeb" stroke-width="4"/><path d="M583.5 608.0 A14.5 14.5 0 1 1 581.46 636.86" fill="none" stroke="#e8b10f" stroke-width="4"/></svg>
<div class="t" style="left:573.72px;top:617.82px;font-size:11.2px;color:#2d3142;font-weight:400;font-style:normal;">20.9</div>
<div class="t" style="left:766.10px;top:616.94px;font-size:12px;color:#3e4450;font-weight:400;font-style:normal;">-</div>
<div class="r" style="left:871.2px;top:612.0px;width:70.4px;height:20px;background:#f6f7f9;border-radius:10px"></div>
<div class="t" style="left:876.20px;top:618.01px;font-size:10.5px;color:#3b3f48;font-weight:400;font-style:normal;transform:scaleX(0.9007);">Temp: 20.9 °C</div>
<div class="r" style="left:952.1px;top:612.0px;width:76.3px;height:20px;background:#f6f7f9;border-radius:10px"></div>
<div class="t" style="left:957.10px;top:618.01px;font-size:10.5px;color:#3b3f48;font-weight:400;font-style:normal;transform:scaleX(0.9141);">Presence: false</div>
<div class="t" style="left:1066.20px;top:617.04px;font-size:12px;color:#3e4450;font-weight:400;font-style:normal;transform:scaleX(0.9740);">Generic</div>
<div class="t" style="left:1733.47px;top:617.04px;font-size:12px;color:#3e4450;font-weight:400;font-style:normal;transform:scaleX(0.9950);">2 minutes ago</div>
<div class="r" style="left:301px;top:643px;width:1523px;height:1px;background:#e6e8ec"></div>
<div class="t" style="left:316.40px;top:659.04px;font-size:12px;color:#3e4450;font-weight:400;font-style:normal;transform:scaleX(0.9250);">Seat-2</div>
<svg style="left:565px;top:646.0px" width="37" height="37" viewBox="565 646.0 37 37"><circle cx="583.5" cy="664.5" r="14.5" fill="none" stroke="#ebebeb" stroke-width="4"/><path d="M583.5 650.0 A14.5 14.5 0 0 1 593.26 653.78" fill="none" stroke="#9ba1a9" stroke-width="4"/></svg>
<div class="t" style="left:576.83px;top:659.82px;font-size:11.2px;color:#2d3142;font-weight:400;font-style:normal;">4.7</div>
<div class="t" style="left:766.10px;top:658.94px;font-size:12px;color:#3e4450;font-weight:400;font-style:normal;">-</div>
<div class="r" style="left:871.2px;top:654.0px;width:65.2px;height:20px;background:#f6f7f9;border-radius:10px"></div>
<div class="t" style="left:876.20px;top:660.01px;font-size:10.5px;color:#3b3f48;font-weight:400;font-style:normal;transform:scaleX(0.9021);">Temp: 4.7 °C</div>
<div class="r" style="left:946.9px;top:654.0px;width:76.3px;height:20px;background:#f6f7f9;border-radius:10px"></div>
<div class="t" style="left:951.93px;top:660.01px;font-size:10.5px;color:#3b3f48;font-weight:400;font-style:normal;transform:scaleX(0.9141);">Presence: false</div>
<div class="t" style="left:1066.20px;top:659.04px;font-size:12px;color:#3e4450;font-weight:400;font-style:normal;transform:scaleX(0.9740);">Generic</div>
<div class="t" style="left:1733.47px;top:659.04px;font-size:12px;color:#3e4450;font-weight:400;font-style:normal;transform:scaleX(0.9950);">8 minutes ago</div>
<div class="r" style="left:301px;top:685px;width:1523px;height:1px;background:#e6e8ec"></div>
<div class="t" style="left:316.40px;top:701.04px;font-size:12px;color:#3e4450;font-weight:400;font-style:normal;transform:scaleX(0.9250);">Seat-3</div>
<svg style="left:565px;top:688.0px" width="37" height="37" viewBox="565 688.0 37 37"><circle cx="583.5" cy="706.5" r="14.5" fill="none" stroke="#ebebeb" stroke-width="4"/><path d="M583.5 692.0 A14.5 14.5 0 0 1 597.96 707.64" fill="none" stroke="#2f82c3" stroke-width="4"/></svg>
<div class="t" style="left:573.72px;top:701.82px;font-size:11.2px;color:#2d3142;font-weight:400;font-style:normal;">10.5</div>
<div class="t" style="left:766.10px;top:700.94px;font-size:12px;color:#3e4450;font-weight:400;font-style:normal;">-</div>
<div class="r" style="left:871.2px;top:696.0px;width:70.5px;height:20px;background:#f6f7f9;border-radius:10px"></div>
<div class="t" style="left:876.20px;top:702.01px;font-size:10.5px;color:#3b3f48;font-weight:400;font-style:normal;transform:scaleX(0.9021);">Temp: 10.5 °C</div>
<div class="r" style="left:952.2px;top:696.0px;width:76.3px;height:20px;background:#f6f7f9;border-radius:10px"></div>
<div class="t" style="left:957.20px;top:702.01px;font-size:10.5px;color:#3b3f48;font-weight:400;font-style:normal;transform:scaleX(0.9141);">Presence: false</div>
<div class="t" style="left:1066.20px;top:701.04px;font-size:12px;color:#3e4450;font-weight:400;font-style:normal;transform:scaleX(0.9740);">Generic</div>
<div class="t" style="left:1726.83px;top:701.04px;font-size:12px;color:#3e4450;font-weight:400;font-style:normal;transform:scaleX(0.9950);">15 minutes ago</div>
<div class="r" style="left:301px;top:727px;width:1523px;height:1px;background:#e6e8ec"></div>
<div class="t" style="left:316.40px;top:743.04px;font-size:12px;color:#3e4450;font-weight:400;font-style:normal;transform:scaleX(0.9250);">Seat-4</div>
<svg style="left:565px;top:730.0px" width="37" height="37" viewBox="565 730.0 37 37"><circle cx="583.5" cy="748.5" r="14.5" fill="none" stroke="#ebebeb" stroke-width="4"/><path d="M583.5 734.0 A14.5 14.5 0 0 1 597.96 749.64" fill="none" stroke="#2f82c3" stroke-width="4"/></svg>
<div class="t" style="left:573.72px;top:743.82px;font-size:11.2px;color:#2d3142;font-weight:400;font-style:normal;">10.5</div>
<div class="t" style="left:766.10px;top:742.94px;font-size:12px;color:#3e4450;font-weight:400;font-style:normal;">-</div>
<div class="r" style="left:871.2px;top:738.0px;width:70.5px;height:20px;background:#f6f7f9;border-radius:10px"></div>
<div class="t" style="left:876.20px;top:744.01px;font-size:10.5px;color:#3b3f48;font-weight:400;font-style:normal;transform:scaleX(0.9021);">Temp: 10.5 °C</div>
<div class="r" style="left:952.2px;top:738.0px;width:76.3px;height:20px;background:#f6f7f9;border-radius:10px"></div>
<div class="t" style="left:957.20px;top:744.01px;font-size:10.5px;color:#3b3f48;font-weight:400;font-style:normal;transform:scaleX(0.9141);">Presence: false</div>
<div class="t" style="left:1066.20px;top:743.04px;font-size:12px;color:#3e4450;font-weight:400;font-style:normal;transform:scaleX(0.9740);">Generic</div>
<div class="t" style="left:1726.83px;top:743.04px;font-size:12px;color:#3e4450;font-weight:400;font-style:normal;transform:scaleX(0.9950);">14 minutes ago</div>
<div class="r" style="left:301px;top:769px;width:1523px;height:1px;background:#e6e8ec"></div>
<div class="t" style="left:316.40px;top:785.04px;font-size:12px;color:#3e4450;font-weight:400;font-style:normal;transform:scaleX(0.9250);">Seat-5</div>
<svg style="left:565px;top:772.0px" width="37" height="37" viewBox="565 772.0 37 37"><circle cx="583.5" cy="790.5" r="14.5" fill="none" stroke="#ebebeb" stroke-width="4"/><path d="M583.5 776.0 A14.5 14.5 0 0 1 597.97 789.59" fill="none" stroke="#2f82c3" stroke-width="4"/></svg>
<div class="t" style="left:576.83px;top:785.82px;font-size:11.2px;color:#2d3142;font-weight:400;font-style:normal;">9.6</div>
<div class="t" style="left:766.10px;top:784.94px;font-size:12px;color:#3e4450;font-weight:400;font-style:normal;">-</div>
<div class="r" style="left:871.2px;top:780.0px;width:65.2px;height:20px;background:#f6f7f9;border-radius:10px"></div>
<div class="t" style="left:876.20px;top:786.01px;font-size:10.5px;color:#3b3f48;font-weight:400;font-style:normal;transform:scaleX(0.9021);">Temp: 9.6 °C</div>
<div class="r" style="left:946.9px;top:780.0px;width:76.3px;height:20px;background:#f6f7f9;border-radius:10px"></div>
<div class="t" style="left:951.93px;top:786.01px;font-size:10.5px;color:#3b3f48;font-weight:400;font-style:normal;transform:scaleX(0.9141);">Presence: false</div>
<div class="t" style="left:1066.20px;top:785.04px;font-size:12px;color:#3e4450;font-weight:400;font-style:normal;transform:scaleX(0.9740);">Generic</div>
<div class="t" style="left:1726.83px;top:785.04px;font-size:12px;color:#3e4450;font-weight:400;font-style:normal;transform:scaleX(0.9950);">13 minutes ago</div>
<div class="r" style="left:301px;top:811px;width:1523px;height:1px;background:#e6e8ec"></div>
<div class="t" style="left:316.40px;top:827.04px;font-size:12px;color:#3e4450;font-weight:400;font-style:normal;transform:scaleX(0.9250);">Seat-6</div>
<svg style="left:565px;top:814.0px" width="37" height="37" viewBox="565 814.0 37 37"><circle cx="583.5" cy="832.5" r="14.5" fill="none" stroke="#ebebeb" stroke-width="4"/><path d="M583.5 818.0 A14.5 14.5 0 0 1 597.97 831.59" fill="none" stroke="#2f82c3" stroke-width="4"/></svg>
<div class="t" style="left:576.83px;top:827.82px;font-size:11.2px;color:#2d3142;font-weight:400;font-style:normal;">9.6</div>
<div class="t" style="left:766.10px;top:826.94px;font-size:12px;color:#3e4450;font-weight:400;font-style:normal;">-</div>
<div class="r" style="left:871.2px;top:822.0px;width:65.2px;height:20px;background:#f6f7f9;border-radius:10px"></div>
<div class="t" style="left:876.20px;top:828.01px;font-size:10.5px;color:#3b3f48;font-weight:400;font-style:normal;transform:scaleX(0.9021);">Temp: 9.6 °C</div>
<div class="r" style="left:946.9px;top:822.0px;width:76.3px;height:20px;background:#f6f7f9;border-radius:10px"></div>
<div class="t" style="left:951.93px;top:828.01px;font-size:10.5px;color:#3b3f48;font-weight:400;font-style:normal;transform:scaleX(0.9141);">Presence: false</div>
<div class="t" style="left:1066.20px;top:827.04px;font-size:12px;color:#3e4450;font-weight:400;font-style:normal;transform:scaleX(0.9740);">Generic</div>
<div class="t" style="left:1726.83px;top:827.04px;font-size:12px;color:#3e4450;font-weight:400;font-style:normal;transform:scaleX(0.9950);">13 minutes ago</div>
<div class="r" style="left:301px;top:853px;width:1523px;height:1px;background:#e6e8ec"></div>
<div class="t" style="left:316.40px;top:869.04px;font-size:12px;color:#3e4450;font-weight:400;font-style:normal;transform:scaleX(0.9250);">Seat-7</div>
<svg style="left:565px;top:856.0px" width="37" height="37" viewBox="565 856.0 37 37"><circle cx="583.5" cy="874.5" r="14.5" fill="none" stroke="#ebebeb" stroke-width="4"/><path d="M583.5 860.0 A14.5 14.5 0 0 1 587.55 860.58" fill="none" stroke="#9ba1a9" stroke-width="4"/></svg>
<div class="t" style="left:576.83px;top:869.82px;font-size:11.2px;color:#2d3142;font-weight:400;font-style:normal;">1.8</div>
<div class="t" style="left:766.10px;top:868.94px;font-size:12px;color:#3e4450;font-weight:400;font-style:normal;">-</div>
<div class="r" style="left:871.2px;top:864.0px;width:65.2px;height:20px;background:#f6f7f9;border-radius:10px"></div>
<div class="t" style="left:876.20px;top:870.01px;font-size:10.5px;color:#3b3f48;font-weight:400;font-style:normal;transform:scaleX(0.9021);">Temp: 1.8 °C</div>
<div class="r" style="left:946.9px;top:864.0px;width:76.3px;height:20px;background:#f6f7f9;border-radius:10px"></div>
<div class="t" style="left:951.93px;top:870.01px;font-size:10.5px;color:#3b3f48;font-weight:400;font-style:normal;transform:scaleX(0.9141);">Presence: false</div>
<div class="t" style="left:1066.20px;top:869.04px;font-size:12px;color:#3e4450;font-weight:400;font-style:normal;transform:scaleX(0.9740);">Generic</div>
<div class="t" style="left:1726.83px;top:869.04px;font-size:12px;color:#3e4450;font-weight:400;font-style:normal;transform:scaleX(0.9950);">12 minutes ago</div>
<div class="r" style="left:301px;top:895px;width:1523px;height:1px;background:#e6e8ec"></div>
<div class="t" style="left:317.30px;top:921.49px;font-size:12.3px;color:#474c57;font-weight:400;font-style:normal;transform:scaleX(0.9498);">Showing 1-15 of 34</div>
<div class="t" style="left:458.16px;top:921.49px;font-size:12.3px;color:#474c57;font-weight:400;font-style:normal;transform:scaleX(0.9414);">Items per page:</div>
<div class="t" style="left:544.70px;top:920.86px;font-size:10.8px;color:#2b303a;font-weight:400;font-style:normal;transform:scaleX(0.8996);">15</div>
<svg style="left:568px;top:924.0px" width="8" height="5" viewBox="0 0 8 5"><path d="M0.8 0.8 L4 4 L7.2 0.8" fill="none" stroke="#333" stroke-width="1.1"/></svg>
<svg style="left:1434px;top:919.5px" width="14" height="14" viewBox="1434 180 14 14"><path d="M1445.6 189.1 A5.15 5.15 0 1 1 1444.85 183.6" fill="none" stroke="#1c2029" stroke-width="1.35"/><path d="M1446.7 180.9 L1446.7 185.9 L1441.7 185.9Z" fill="#1c2029"/></svg>
<div class="t" style="left:1455.60px;top:921.50px;font-size:10.4px;color:#3b4a6b;font-weight:400;font-style:normal;transform:scaleX(1.1465);">Off</div>
<svg style="left:1482.5px;top:923.5px" width="7" height="5" viewBox="0 0 7 5"><path d="M0.7 0.7 L3.5 3.9 L6.3 0.7" fill="none" stroke="#333" stroke-width="1.2"/></svg>
<div class="t" style="left:1500.40px;top:921.64px;font-size:12px;color:#22262e;font-weight:400;font-style:normal;transform:scaleX(0.9400);">Text size:</div>
<div class="t" style="left:1552.80px;top:920.53px;font-size:11.3px;color:#3b4a6b;font-weight:400;font-style:normal;transform:scaleX(0.9265);">Small</div>
<svg style="left:1598.5px;top:923.5px" width="7" height="5" viewBox="0 0 7 5"><path d="M0.7 0.7 L3.5 3.9 L6.3 0.7" fill="none" stroke="#333" stroke-width="1.2"/></svg>
<div class="r" style="left:1630px;top:916.0px;width:25px;height:22px;border:1px solid #e1e3e7;border-radius:4px;background:#fff"></div>
<svg style="left:1636px;top:920.5px" width="13" height="13" viewBox="0 0 13 13"><path d="M0 1 H13 M0 3.9 H9 M0 6.6 H13 M0 9.5 H9 M0 12.2 H13" stroke="#4a4f58" stroke-width="1.2"/></svg>
<div class="r" style="left:1665px;top:916.0px;width:50px;height:22px;border:1px solid #e1e3e7;border-radius:4px;background:#fff"></div>
<div class="r" style="left:1666px;top:917.0px;width:24px;height:20px;background:#f1f2f4;border-radius:3px 0 0 3px"></div>
<svg style="left:1672px;top:922.0px" width="13" height="10" viewBox="0 0 13 10"><path d="M0 1 H13 M0 4.8 H13 M0 8.6 H13" stroke="#555a63" stroke-width="1.4"/></svg>
<svg style="left:1697px;top:921.5px" width="11" height="11" viewBox="0 0 11 11"><g fill="#4a4f58"><rect x="0.0" y="0.0" width="2.6" height="2.6"/><rect x="4.2" y="0.0" width="2.6" height="2.6"/><rect x="8.4" y="0.0" width="2.6" height="2.6"/><rect x="0.0" y="4.2" width="2.6" height="2.6"/><rect x="4.2" y="4.2" width="2.6" height="2.6"/><rect x="8.4" y="4.2" width="2.6" height="2.6"/><rect x="0.0" y="8.4" width="2.6" height="2.6"/><rect x="4.2" y="8.4" width="2.6" height="2.6"/><rect x="8.4" y="8.4" width="2.6" height="2.6"/></g></svg>
<svg style="left:1730px;top:922.0px" width="7" height="10" viewBox="0 0 7 10"><path d="M5.8 0.8 L1.5 4.6 L5.8 8.4" fill="none" stroke="#c5c9d0" stroke-width="1.6"/></svg>
<div class="t" style="left:1748.97px;top:920.47px;font-size:13.5px;color:#3b4a6b;font-weight:400;font-style:normal;transform:scaleX(1.1281);">1/ 3</div>
<svg style="left:1787px;top:922.0px" width="7" height="10" viewBox="0 0 7 10"><path d="M1.2 0.8 L5.5 4.6 L1.2 8.4" fill="none" stroke="#1f2530" stroke-width="2"/></svg>
</body></html>
